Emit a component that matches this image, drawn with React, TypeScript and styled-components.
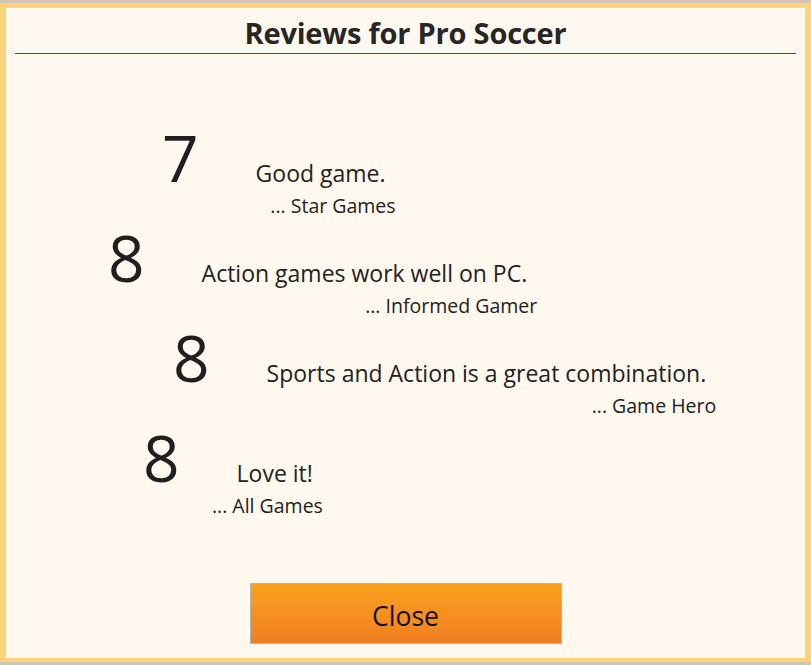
import styled, { createGlobalStyle } from 'styled-components';

const GlobalStyle = createGlobalStyle`
  html, body {
    margin: 0;
    padding: 0;
    background: #cdc7b2;
  }
  body {
    font-family: "Open Sans", "Noto Sans", sans-serif;
    color: #222;
  }
`;

const Page = styled.div`
  height: 665px;
  padding-top: 3px;
  box-sizing: border-box;
  overflow: hidden;
`;

const Dialog = styled.div`
  height: 659px;
  box-sizing: border-box;
  border-style: solid;
  border-color: #ffd27c;
  border-width: 5px 6px 4px;
  background: #fff8ee;
  padding: 0 9px;
  display: flex;
  flex-direction: column;
`;

const Title = styled.h1`
  margin: 0;
  padding-top: 7px;
  height: 46px;
  box-sizing: border-box;
  text-align: center;
  font-size: 29px;
  font-weight: 700;
  line-height: 36px;
  letter-spacing: -0.2px;
  color: #262626;
  border-bottom: 1px solid #0a5ab0;
`;

const ReviewList = styled.div`
  display: flex;
  flex-direction: column;
  padding-top: 72px;
`;

const Row = styled.div<{ $offset: number }>`
  display: flex;
  align-items: baseline;
  height: 100px;
  margin-left: ${p => p.$offset}px;
`;

const Score = styled.div`
  font-size: 64px;
  line-height: 64px;
  font-weight: 400;
  color: #1f1f1f;
  margin-right: 57px;
`;

const Body = styled.div`
  display: flex;
  flex-direction: column;
`;

const Comment = styled.div`
  font-size: 23px;
  line-height: 30px;
  padding-right: 10px;
  white-space: nowrap;
`;

const AuthorLine = styled.div`
  display: flex;
  justify-content: flex-end;
  width: 0;
  min-width: 100%;
  white-space: nowrap;
  font-size: 19.5px;
  line-height: 26px;
  margin-top: 5px;
`;

const Footer = styled.div`
  margin-top: auto;
  display: flex;
  justify-content: center;
  padding-bottom: 14px;
`;

const CloseButton = styled.button`
  width: 312px;
  height: 61px;
  border: 1px solid #b3b3b3;
  background: linear-gradient(to bottom, #f9a21e, #f27e22);
  font-family: "Open Sans", "Noto Sans", sans-serif;
  font-size: 26.5px;
  color: #111;
  cursor: pointer;
  padding: 5px 0 0;
`;

const reviews = [
  { score: 7, text: 'Good game.', author: 'Star Games', offset: 147 },
  { score: 8, text: 'Action games work well on PC.', author: 'Informed Gamer', offset: 93 },
  { score: 8, text: 'Sports and Action is a great combination.', author: 'Game Hero', offset: 158 },
  { score: 8, text: 'Love it!', author: 'All Games', offset: 128 },
];

export default function App() {
  return (
    <Page>
      <GlobalStyle />
      <Dialog>
        <Title>Reviews for Pro Soccer</Title>
        <ReviewList>
          {reviews.map((r, i) => (
            <Row key={i} $offset={r.offset}>
              <Score>{r.score}</Score>
              <Body>
                <Comment>{r.text}</Comment>
                <AuthorLine>
                  <span>... {r.author}</span>
                </AuthorLine>
              </Body>
            </Row>
          ))}
        </ReviewList>
        <Footer>
          <CloseButton>Close</CloseButton>
        </Footer>
      </Dialog>
    </Page>
  );
}
